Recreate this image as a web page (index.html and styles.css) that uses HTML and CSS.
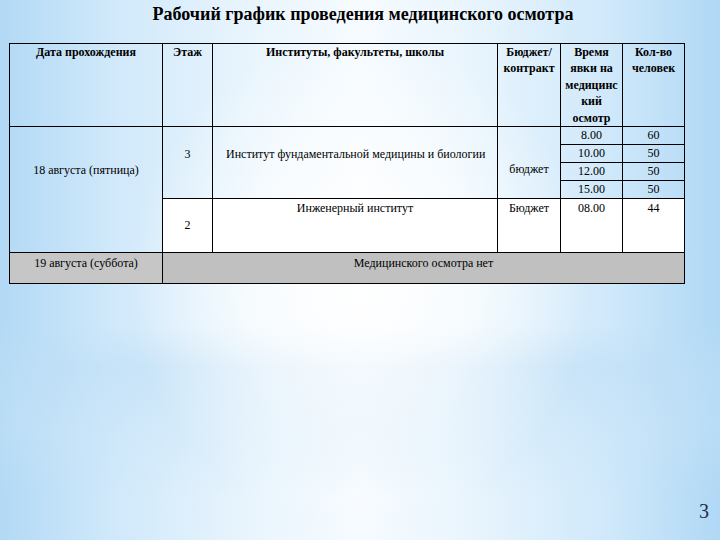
FILE: index.html
```html
<!DOCTYPE html>
<html lang="ru">
<head>
<meta charset="utf-8">
<link rel="stylesheet" href="styles.css">
</head>
<body>
<div class="slide">
  <h1 class="title">Рабочий график проведения медицинского осмотра</h1>
  <table class="grid">
    <colgroup>
      <col class="c-date"><col class="c-floor"><col class="c-inst"><col class="c-budget"><col class="c-time"><col class="c-count">
    </colgroup>
    <tr class="head">
      <th>Дата прохождения</th>
      <th>Этаж</th>
      <th>Институты, факультеты, школы</th>
      <th>Бюджет/<br>контракт</th>
      <th>Время<br>явки на<br>медицинс<br>кий<br>осмотр</th>
      <th>Кол-во<br>человек</th>
    </tr>
    <tr class="sub">
      <td rowspan="5" class="date">18 августа (пятница)</td>
      <td rowspan="4" class="floor3">3</td>
      <td rowspan="4" class="inst1">Институт фундаментальной медицины и биологии</td>
      <td rowspan="4" class="budget1">бюджет</td>
      <td class="num">8.00</td>
      <td class="num">60</td>
    </tr>
    <tr class="sub"><td class="num">10.00</td><td class="num">50</td></tr>
    <tr class="sub"><td class="num">12.00</td><td class="num">50</td></tr>
    <tr class="sub"><td class="num">15.00</td><td class="num">50</td></tr>
    <tr class="eng">
      <td class="floor2">2</td>
      <td class="top">Инженерный институт</td>
      <td class="top">Бюджет</td>
      <td class="top">08.00</td>
      <td class="top">44</td>
    </tr>
    <tr class="sat">
      <td class="top">19 августа (суббота)</td>
      <td colspan="5" class="top">Медицинского осмотра нет</td>
    </tr>
  </table>
  <div class="pagenum">3</div>
</div>
</body>
</html>
```

FILE: styles.css
```css
html, body {
  margin: 0;
  padding: 0;
}
body {
  width: 720px;
  height: 540px;
  overflow: hidden;
  background:
    radial-gradient(ellipse 32% 45% at 50% 52%, rgba(255,255,255,0.95) 0%, rgba(255,255,255,0.6) 50%, rgba(255,255,255,0) 100%),
    linear-gradient(180deg, rgba(200,228,248,0) 60%, rgba(190,222,246,0.55) 68%, rgba(200,228,248,0.35) 80%, rgba(220,238,251,0) 92%),
    linear-gradient(90deg, #b2d9f5 0%, #cfe8fa 15%, #e9f5fd 35%, #f6fbff 50%, #e9f5fd 65%, #cfe8fa 85%, #b0d8f5 100%);
  font-family: "Liberation Serif", "Times New Roman", serif;
  color: #000;
}
.slide {
  width: 720px;
  height: 540px;
  display: flex;
  flex-direction: column;
}
.title {
  margin: 3px 0 0 0;
  height: 24px;
  line-height: 22px;
  font-size: 18px;
  font-weight: bold;
  text-align: center;
  padding-left: 6px;
  font-family: "Liberation Serif", "Times New Roman", serif;
}
.grid {
  margin: 16px 0 0 9px;
  border-collapse: collapse;
  table-layout: fixed;
  width: 675px;
  font-size: 12px;
  font-family: "Liberation Serif", "Times New Roman", serif;
}
.c-date { width: 153px; }
.c-floor { width: 50px; }
.c-inst { width: 285px; }
.c-budget { width: 63px; }
.c-time { width: 62px; }
.c-count { width: 62px; }
.grid th, .grid td {
  border: 1px solid #000;
  padding: 0 2px;
  text-align: center;
  vertical-align: top;
}
.head th {
  height: 82px;
  font-size: 12px;
  line-height: 16.4px;
  padding-top: 0;
  font-weight: bold;
}
.sub td { height: 17px; line-height: 17px; }
.date { padding-top: 35px !important; }
.floor3, .inst1 { padding-top: 19px !important; }
.inst1 { text-align: left !important; padding-left: 13px !important; }
.budget1 { padding-top: 34px !important; }
.num { vertical-align: middle !important; padding: 0 !important; }
.eng td { height: 52px; background: #fff; line-height: 17px; }
.eng .top { padding-top: 1px; }
.floor2 { vertical-align: middle !important; }
.sat td { height: 28px; background: #c0c0c0; line-height: 17px; padding-top: 2px; }
.sat td:first-child { background: #c6c6c6; }
.pagenum {
  margin-top: auto;
  margin-bottom: 17px;
  align-self: flex-end;
  margin-right: 11px;
  font-family: "Liberation Serif", "Times New Roman", serif;
  font-size: 20px;
  color: #1c2f4c;
}
```
